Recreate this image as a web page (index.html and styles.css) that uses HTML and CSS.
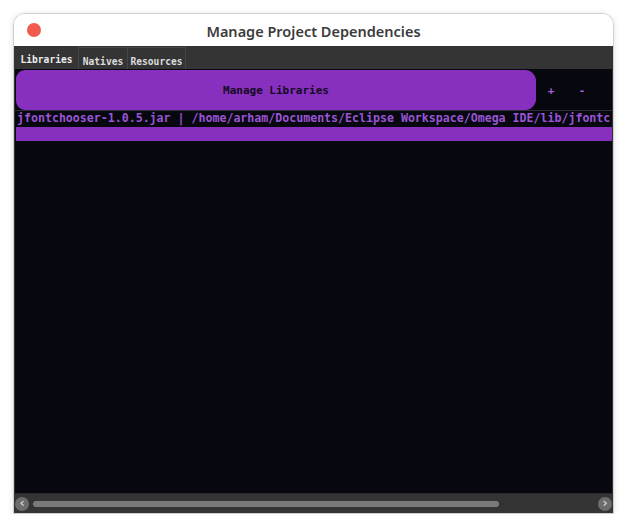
FILE: index.html
```html
<!DOCTYPE html>
<html>
<head>
<meta charset="utf-8">
<link rel="stylesheet" href="styles.css">
</head>
<body>
<div class="window">
  <div class="titlebar">
    <span class="close"></span>
    <span class="title">Manage Project Dependencies</span>
  </div>
  <div class="panel">
    <div class="tabs">
      <div class="tab active">Libraries</div>
      <div class="tab natives">Natives</div>
      <div class="tab resources">Resources</div>
    </div>
    <div class="content">
      <div class="toolbar">
        <div class="manage">Manage Libraries</div>
        <div class="action">+</div>
        <div class="action">-</div>
      </div>
      <div class="row">jfontchooser-1.0.5.jar | /home/arham/Documents/Eclipse Workspace/Omega IDE/lib/jfontc</div>
      <div class="bar"></div>
      <div class="fill"></div>
    </div>
    <div class="hscroll">
      <span class="arrow">&#8249;</span>
      <div class="track"><div class="thumb"></div></div>
      <span class="arrow">&#8250;</span>
    </div>
  </div>
</div>
</body>
</html>
```

FILE: styles.css
```css
html, body {
  margin: 0;
  padding: 0;
  background: #ffffff;
}
.window {
  margin: 13px 0 0 13px;
  width: 599px;
  height: 499px;
  border: 1px solid #cfcfcf;
  border-radius: 12px 12px 0 0;
  box-shadow: 0 1px 6px rgba(0,0,0,0.12);
  display: flex;
  flex-direction: column;
  overflow: hidden;
  background: #ffffff;
}
.titlebar {
  height: 32px;
  flex: none;
  display: flex;
  align-items: center;
  justify-content: center;
  position: relative;
  background: #ffffff;
}
.close {
  position: absolute;
  left: 13px;
  top: 9px;
  width: 14px;
  height: 14px;
  border-radius: 50%;
  background: #f35a4e;
}
.title {
  font-family: "Noto Sans", sans-serif;
  font-weight: 600;
  font-size: 14.5px;
  color: #3c3c3c;
  margin-top: 1px;
}
.panel {
  flex: 1;
  background: #343434;
  display: flex;
  flex-direction: column;
  min-height: 0;
}
.tabs {
  height: 23px;
  flex: none;
  display: flex;
  align-items: flex-end;
  padding-left: 1px;
}
.tab {
  font-family: "DejaVu Sans Mono", monospace;
  font-weight: bold;
  font-size: 9.6px;
  color: #dcdcdc;
  height: 22px;
  box-sizing: border-box;
  padding: 8px 0 0 0;
  text-align: center;
  border: 1px solid #464646;
  border-bottom: none;
}
.tab.active {
  border-color: transparent;
  padding-top: 6px;
  color: #ececec;
  width: 63px;
}
.tab.natives {
  width: 50px;
}
.tab.resources {
  width: 59px;
  margin-left: -1px;
}
.content {
  flex: 1;
  margin: 0 1px;
  background: #07070f;
  display: flex;
  flex-direction: column;
  overflow: hidden;
  min-height: 0;
}
.toolbar {
  height: 40px;
  flex: none;
  display: flex;
  align-items: center;
  padding-top: 1px;
}
.manage {
  width: 520px;
  height: 40px;
  margin-left: 1px;
  background: #8730c0;
  border-radius: 9px 11px 11px 9px;
  display: flex;
  align-items: center;
  justify-content: center;
  font-family: "DejaVu Sans Mono", monospace;
  font-weight: bold;
  font-size: 11px;
  color: #140a22;
}
.action {
  width: 32px;
  text-align: center;
  font-family: "DejaVu Sans Mono", monospace;
  font-weight: bold;
  font-size: 11px;
  color: #a15fd6;
  margin-left: -1px;
}
.row {
  flex: none;
  border-top: 1px solid #2f2f3a;
  height: 16px;
  padding-left: 2px;
  white-space: nowrap;
  overflow: hidden;
  font-family: "DejaVu Sans Mono", monospace;
  font-weight: bold;
  font-size: 11.6px;
  line-height: 15px;
  color: #9a55d6;
}
.bar {
  flex: none;
  height: 14px;
  margin-left: 1px;
  background: #8730c0;
}
.fill {
  flex: 1;
}
.hscroll {
  height: 19px;
  flex: none;
  display: flex;
  align-items: center;
  background: #343434;
  padding: 0 1px;
  border-top: 1px solid #2a2a2a;
}
.arrow {
  width: 14px;
  height: 14px;
  border-radius: 50%;
  background: #6c6c6c;
  color: #e6e6e6;
  font-family: "DejaVu Sans", sans-serif;
  font-size: 13px;
  line-height: 12px;
  text-align: center;
  flex: none;
}
.track {
  flex: 1;
  padding: 0 4px;
}
.thumb {
  width: 466px;
  height: 6px;
  border-radius: 3px;
  background: #7a7a7a;
}
```
